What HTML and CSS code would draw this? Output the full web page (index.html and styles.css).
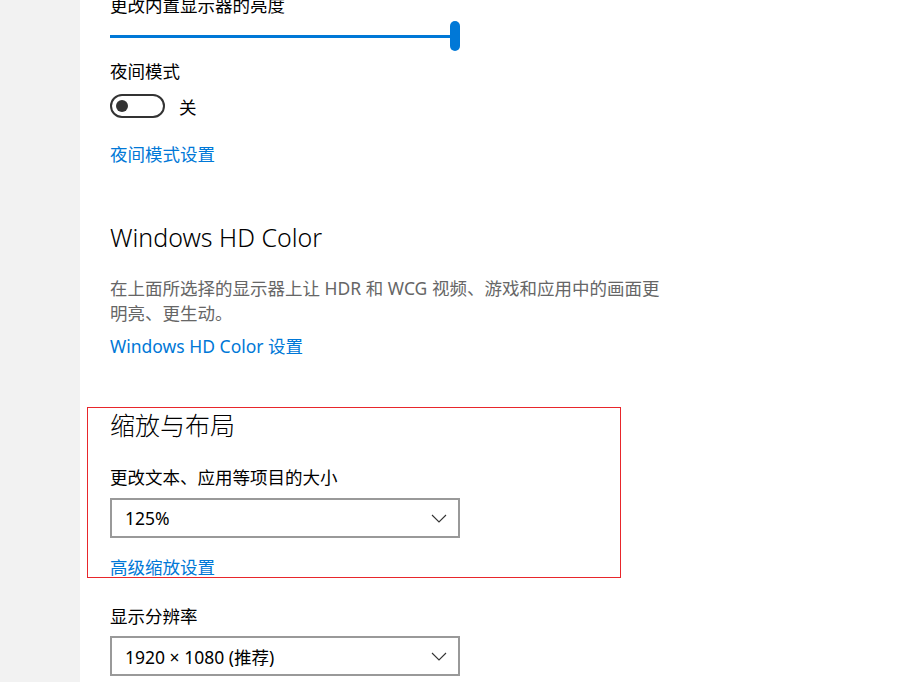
FILE: index.html
```html
<!DOCTYPE html>
<html lang="zh-CN">
<head>
    <meta charset="UTF-8">
    <meta name="viewport" content="width=device-width, initial-scale=1.0">
    <title>显示设置</title>
    <link rel="stylesheet" href="styles.css">
</head>
<body>
    <div class="page">
        <div class="sidebar"></div>
        <div class="main">
            <div class="label first">更改内置显示器的亮度</div>
            <div class="slider">
                <div class="track"></div>
                <div class="thumb"></div>
            </div>

            <div class="label night">夜间模式</div>
            <div class="toggle-row">
                <div class="toggle"><span class="knob"></span></div>
                <span class="toggle-text">关</span>
            </div>
            <a href="#" class="link night-link">夜间模式设置</a>

            <h2 class="heading hd">Windows HD Color</h2>
            <p class="desc">在上面所选择的显示器上让 HDR 和 WCG 视频、游戏和应用中的画面更明亮、更生动。</p>
            <a href="#" class="link hd-link">Windows HD Color 设置</a>

            <div class="highlight">
                <h2 class="heading">缩放与布局</h2>
                <div class="label scale-label">更改文本、应用等项目的大小</div>
                <div class="dropdown">
                    <span>125%</span>
                    <svg width="16" height="9" viewBox="0 0 16 9"><path d="M1 1 L8 8 L15 1" fill="none" stroke="#333" stroke-width="1.1"/></svg>
                </div>
                <a href="#" class="link scale-link">高级缩放设置</a>
            </div>

            <div class="label res-label">显示分辨率</div>
            <div class="dropdown">
                <span>1920 × 1080 (推荐)</span>
                <svg width="16" height="9" viewBox="0 0 16 9"><path d="M1 1 L8 8 L15 1" fill="none" stroke="#333" stroke-width="1.1"/></svg>
            </div>
        </div>
    </div>
</body>
</html>
```

FILE: styles.css
```css
body {
    margin: 0;
    font-family: "Noto Sans", "Noto Sans CJK SC", sans-serif;
    font-size: 17.5px;
    color: #000;
    background: #fff;
    overflow: hidden;
}
.page {
    display: flex;
    height: 682px;
}
.sidebar {
    width: 80px;
    flex-shrink: 0;
    background: #f2f2f2;
}
.main {
    flex: 1;
    padding-left: 30px;
    margin-top: -7px;
}
.label {
    line-height: 24px;
}
.slider {
    display: flex;
    align-items: center;
    width: 350px;
    height: 30px;
    margin-top: 4px;
}
.track {
    flex: 1;
    height: 3px;
    background: #0078d7;
}
.thumb {
    width: 10px;
    height: 30px;
    margin-left: -5px;
    border-radius: 5px;
    background: #0078d7;
}
.night {
    margin-top: 8px;
}
.toggle-row {
    display: flex;
    align-items: center;
    margin-top: 11px;
    height: 24px;
}
.toggle {
    box-sizing: border-box;
    width: 55px;
    height: 24px;
    border: 2px solid #333;
    border-radius: 12px;
    display: flex;
    align-items: center;
    padding-left: 4px;
}
.knob {
    width: 12px;
    height: 12px;
    border-radius: 50%;
    background: #333;
}
.toggle-text {
    margin-left: 14px;
}
.link {
    display: block;
    color: #0078d7;
    text-decoration: none;
    line-height: 24px;
    width: max-content;
}
.night-link {
    margin-top: 24px;
}
.heading {
    margin: 0;
    font-size: 25px;
    font-weight: 300;
    line-height: 32px;
}
.hd {
    margin-top: 55px;
}
.desc {
    margin: 23px 0 0;
    max-width: 556px;
    color: #666;
    line-height: 25px;
}
.hd-link {
    margin-top: 8px;
}
.highlight {
    width: 510px;
    margin: 49px 0 0 -23px;
    padding: 1px 0 0 22px;
    border: 1px solid #e8262b;
}
.scale-label {
    margin-top: 24px;
}
.dropdown {
    box-sizing: border-box;
    width: 350px;
    height: 40px;
    margin-top: 9px;
    padding: 0 11px 0 13px;
    border: 2px solid #999;
    display: flex;
    align-items: center;
    justify-content: space-between;
}
.scale-link {
    margin-top: 19px;
    line-height: 20px;
}
.res-label {
    margin-top: 26px;
}
.res-label + .dropdown {
    margin-top: 8px;
}
```
